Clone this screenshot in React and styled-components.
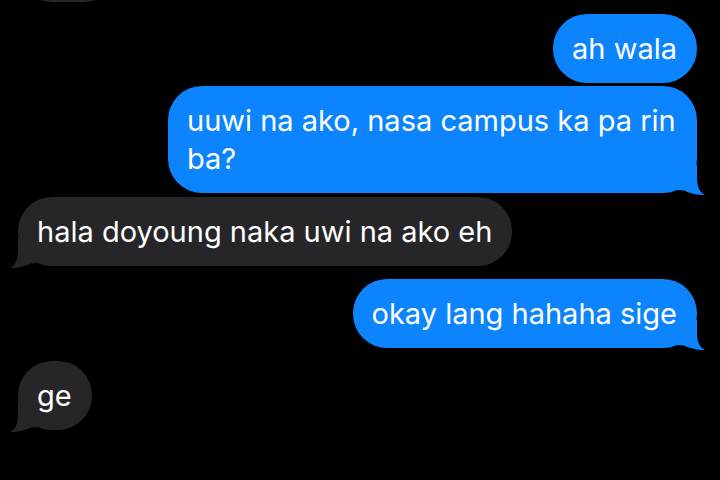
import React from "react";
import styled, { createGlobalStyle } from "styled-components";

const GlobalStyle = createGlobalStyle`
  html, body {
    margin: 0;
    padding: 0;
    background: #000;
  }
`;

const Thread = styled.div`
  width: 720px;
  height: 480px;
  overflow: hidden;
  display: flex;
  flex-direction: column;
  justify-content: flex-end;
  padding: 0 23px 50px 18px;
  box-sizing: border-box;
  background: #000;
  font-family: Inter, "Noto Sans", sans-serif;
`;

const Row = styled.div`
  display: flex;
  justify-content: ${(p) => (p.$mine ? "flex-end" : "flex-start")};
  margin-top: ${(p) => p.$gap || 0}px;
  flex-shrink: 0;
`;

const Bubble = styled.div`
  position: relative;
  max-width: 529px;
  min-height: 69px;
  box-sizing: border-box;
  padding: 16px 20px 15px 19px;
  border-radius: 34px;
  background: ${(p) => (p.$mine ? "#0b84fe" : "#262628")};
  color: #fff;
  font-size: 29px;
  line-height: 38px;
  letter-spacing: 0;
`;

/* earlier message, scrolled almost fully out of view */
const ScrolledBubble = styled(Bubble)`
  width: 100px;
`;

const Tail = styled.svg`
  position: absolute;
  bottom: -2px;
  width: 28px;
  height: 30px;
  ${(p) =>
    p.$mine
      ? "right: -8px;"
      : "left: -8px; transform: scaleX(-1);"}
`;

const BubbleTail = ({ mine }) => (
  <Tail $mine={mine} viewBox="0 0 28 30">
    <path
      d="M20 0 L20 12 C20 21 22 27 28 30 C22 30.4 13 28.6 7 25.6 L0 25 L0 0 Z"
      fill={mine ? "#0b84fe" : "#262628"}
    />
  </Tail>
);

const messages = [
  { text: "ah wala", mine: true, gap: 12 },
  { text: "uuwi na ako, nasa campus ka pa rin ba?", mine: true, gap: 3, tail: true },
  { text: "hala doyoung naka uwi na ako eh", mine: false, gap: 4, tail: true },
  { text: "okay lang hahaha sige", mine: true, gap: 13, tail: true },
  { text: "ge", mine: false, gap: 13, tail: true },
];

export default function App() {
  return (
    <>
      <GlobalStyle />
      <Thread>
        <Row>
          <ScrolledBubble />
        </Row>
        {messages.map((m, i) => (
          <Row key={i} $mine={m.mine} $gap={m.gap}>
            <Bubble $mine={m.mine}>
              {m.text}
              {m.tail && <BubbleTail mine={m.mine} />}
            </Bubble>
          </Row>
        ))}
      </Thread>
    </>
  );
}
